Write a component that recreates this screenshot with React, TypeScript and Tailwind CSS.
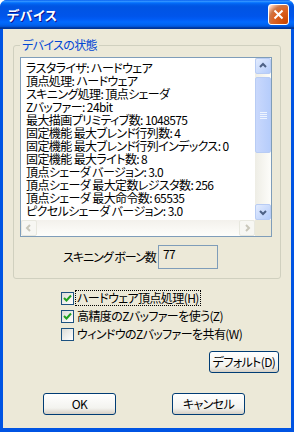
const lines = [
  "ラスタライザ: ハードウェア",
  "頂点処理: ハードウェア",
  "スキニング処理: 頂点シェーダ",
  "Zバッファー: 24bit",
  "最大描画プリミティブ数: 1048575",
  "固定機能 最大ブレンド行列数: 4",
  "固定機能 最大ブレンド行列インデックス: 0",
  "固定機能 最大ライト数: 8",
  "頂点シェーダ バージョン: 3.0",
  "頂点シェーダ 最大定数レジスタ数: 256",
  "頂点シェーダ 最大命令数: 65535",
  "ピクセルシェーダ バージョン: 3.0",
];

function Chevron({ dir, color }: { dir: "up" | "down" | "left" | "right"; color: string }) {
  const pts = {
    up: "3,7 6,4 9,7",
    down: "3,5 6,8 9,5",
    left: "7,3 4,6 7,9",
    right: "5,3 8,6 5,9",
  }[dir];
  return (
    <svg width="12" height="12" viewBox="0 0 12 12">
      <polyline points={pts} fill="none" stroke={color} strokeWidth="2" />
    </svg>
  );
}

function Check({ checked, label, focus }: { checked: boolean; label: React.ReactNode; focus?: boolean }) {
  return (
    <div className="flex items-center h-[18px]">
      <div className="w-[13px] h-[13px] border border-[#1C5180] bg-[linear-gradient(135deg,#DCDCD7,#FFFFFF)] flex items-center justify-center">
        {checked && (
          <svg width="9" height="9" viewBox="0 0 9 9">
            <polyline points="1,4 3.5,6.5 8,1.5" fill="none" stroke="#21A121" strokeWidth="2" />
          </svg>
        )}
      </div>
      <span
        className={
          "ml-[2px] px-[1px] leading-[14px] whitespace-nowrap " +
          (focus ? "outline outline-1 outline-dotted outline-black" : "")
        }
      >
        {label}
      </span>
    </div>
  );
}

function Btn({ children, w }: { children: React.ReactNode; w: string }) {
  return (
    <button
      className={
        w +
        " h-[22px] rounded-[3px] border border-[#003C74] bg-[linear-gradient(to_bottom,#FFFFFF,#F3F3EF_70%,#D6D0C5)] text-[12px] text-black flex items-center justify-center whitespace-nowrap"
      }
    >
      {children}
    </button>
  );
}

export default function App() {
  return (
    <div className="w-[294px] h-[432px] flex flex-col bg-[#0054E3] rounded-t-[7px] overflow-hidden font-['Noto_Sans_CJK_JP','Noto_Sans',sans-serif] [font-feature-settings:'palt'] text-[12px] tracking-[-0.6px] text-black">
      {/* title bar */}
      <div className="h-[29px] shrink-0 flex items-center px-[7px] bg-[linear-gradient(to_bottom,#0058EE_0%,#3593FF_4%,#288EFF_6%,#127DFF_8%,#036FFC_10%,#0262EE_14%,#0057E5_20%,#0054E3_24%,#0055EB_56%,#005BF5_66%,#026AFE_76%,#0062EF_86%,#0052D6_92%,#0040AB_94%,#003092_100%)]">
        <span className="text-white font-bold text-[13px] [text-shadow:1px_1px_#0F1089] tracking-[0.5px]">デバイス</span>
        <div className="ml-auto mr-[-2px] w-[21px] h-[21px] rounded-[3px] border border-white bg-[radial-gradient(circle_at_90%_90%,#CC4600_0%,#DC6527_55%,#CD7546_70%,#FFCCB2_90%,#FFFFFF_100%)] flex items-center justify-center">
          <svg width="11" height="11" viewBox="0 0 11 11">
            <path d="M1.5 1.5 L9.5 9.5 M9.5 1.5 L1.5 9.5" stroke="white" strokeWidth="2" />
          </svg>
        </div>
      </div>
      {/* client */}
      <div className="flex-1 mx-[3px] mb-[4px] bg-[#ECE9D8] flex flex-col">
        {/* group box */}
        <div className="mt-[16px] mx-[10px] h-[234px] border border-[#D0D0BF] rounded-[3px] relative flex flex-col">
          <span className="absolute left-[6px] top-[-9px] px-[2px] bg-[#ECE9D8] text-[#0046D5] leading-[16px]">デバイスの状態</span>
          {/* list box */}
          <div className="mt-[11px] ml-[6px] mr-[8px] h-[180px] border border-[#7F9DB9] bg-white flex flex-col">
            <div className="flex flex-1 min-h-0">
              <div className="flex-1 pt-[3px] pl-[5px] overflow-hidden whitespace-nowrap">
                {lines.map((l) => (
                  <div key={l} className="leading-[13px] h-[13px]">{l}</div>
                ))}
              </div>
              {/* vertical scrollbar */}
              <div className="w-[16px] flex flex-col bg-[linear-gradient(to_right,#EEEDE5,#FDFDFA)]">
                <div className="h-[16px] w-[16px] rounded-[2px] border border-[#B8CCF4] bg-[linear-gradient(135deg,#E3ECFE,#B4CCFB)] flex items-center justify-center">
                  <Chevron dir="up" color="#4D6185" />
                </div>
                <div className="mt-[3px] h-[76px] w-[16px] rounded-[2px] border border-[#B8CCF4] bg-[linear-gradient(to_right,#C9D8FC,#B6CDFB)] flex flex-col items-center justify-center gap-[1px]">
                  <div className="w-[7px] h-[1px] bg-[#EEF4FE]" />
                  <div className="w-[7px] h-[1px] bg-[#EEF4FE]" />
                  <div className="w-[7px] h-[1px] bg-[#EEF4FE]" />
                  <div className="w-[7px] h-[1px] bg-[#EEF4FE]" />
                </div>
                <div className="flex-1" />
                <div className="h-[16px] w-[16px] rounded-[2px] border border-[#B8CCF4] bg-[linear-gradient(135deg,#E3ECFE,#B4CCFB)] flex items-center justify-center">
                  <Chevron dir="down" color="#4D6185" />
                </div>
              </div>
            </div>
            {/* horizontal scrollbar */}
            <div className="h-[16px] flex shrink-0">
              <div className="flex-1 flex bg-[linear-gradient(to_bottom,#F3F1EC,#FEFEFB)]">
                <div className="w-[16px] h-[16px] rounded-[2px] border border-[#E8E8DF] bg-[#F7F7F3] flex items-center justify-center">
                  <Chevron dir="left" color="#C9C7BA" />
                </div>
                <div className="flex-1" />
                <div className="w-[16px] h-[16px] rounded-[2px] border border-[#E8E8DF] bg-[#F7F7F3] flex items-center justify-center">
                  <Chevron dir="right" color="#C9C7BA" />
                </div>
              </div>
              <div className="w-[16px] bg-[#ECE9D8]" />
            </div>
          </div>
          {/* skinning bones */}
          <div className="mt-[8px] flex items-center">
            <span className="ml-[49px] w-[95px] whitespace-nowrap tracking-[-1px]">スキニング ボーン数</span>
            <div className="w-[60px] h-[24px] border border-[#7F9DB9] bg-[#ECE9D8] pl-[4px] pt-[1px] leading-[14px]">77</div>
          </div>
        </div>
        {/* checkboxes */}
        <div className="mt-[10px] ml-[58px] flex flex-col">
          <Check checked focus label="ハードウェア頂点処理(H)" />
          <Check checked label="高精度のZバッファーを使う(Z)" />
          <Check checked={false} label="ウィンドウのZバッファーを共有(W)" />
        </div>
        <div className="mt-[8px] flex justify-end pr-[12px]">
          <Btn w="w-[70px]">デフォルト(D)</Btn>
        </div>
        <div className="mt-[20px] flex pl-[40px] gap-[56px]">
          <Btn w="w-[73px]">OK</Btn>
          <Btn w="w-[73px]">キャンセル</Btn>
        </div>
      </div>
    </div>
  );
}
